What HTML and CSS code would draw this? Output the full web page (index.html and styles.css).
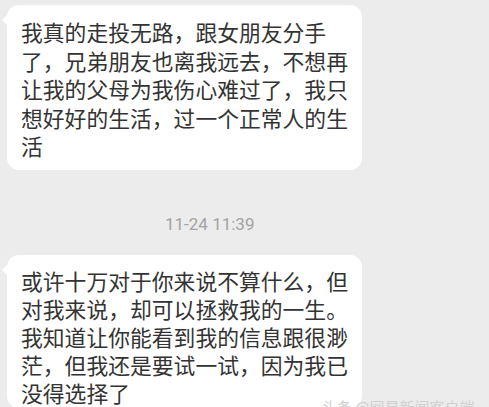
FILE: index.html
```html
<!DOCTYPE html>
<html lang="zh-CN">
<head>
    <meta charset="UTF-8">
    <meta name="viewport" content="width=device-width, initial-scale=1.0">
    <title>聊天记录</title>
    <link rel="stylesheet" href="styles.css">
</head>
<body>

    <div class="chat">
        <div class="bubble">
            我真的走投无路，跟女朋友分手<br>
            了，兄弟朋友也离我远去，不想再<br>
            让我的父母为我伤心难过了，我只<br>
            想好好的生活，过一个正常人的生<br>
            活
        </div>

        <div class="time">11-24 11:39</div>

        <div class="bubble bubble-last">
            或许十万对于你来说不算什么，但<br>
            对我来说，却可以拯救我的一生。<br>
            我知道让你能看到我的信息跟很渺<br>
            茫，但我还是要试一试，因为我已<br>
            没得选择了
        </div>
    </div>

    <div class="watermark">头条 @网易新闻客户端</div>

</body>
</html>
```

FILE: styles.css
```css
body {
    margin: 0;
    background: #ececec;
    font-family: "Noto Sans CJK SC", "Noto Sans", sans-serif;
    color: #333;
    overflow: hidden;
    height: 407px;
    position: relative;
}
.chat {
    padding: 5px 0 0 7px;
}
.bubble {
    position: relative;
    width: 328px;
    padding: 13px 13px 9px 14px;
    background: #fff;
    border-radius: 12px;
    font-size: 21.8px;
    line-height: 28.5px;
    white-space: nowrap;
}
.bubble::before {
    content: "";
    position: absolute;
    left: -5px;
    top: 10px;
    border-top: 5px solid transparent;
    border-bottom: 5px solid transparent;
    border-right: 5px solid #fff;
}
.bubble-last {
    padding-top: 12px;
    padding-bottom: 0;
    line-height: 28.2px;
}
.time {
    margin: 44px 0 21px 158px;
    font-family: Roboto, "Liberation Sans", sans-serif;
    font-size: 17px;
    line-height: 20px;
    color: #a3a3a3;
}
.watermark {
    position: absolute;
    left: 322px;
    top: 396px;
    font-size: 15px;
    color: #d0d0d0;
    white-space: nowrap;
}
```
